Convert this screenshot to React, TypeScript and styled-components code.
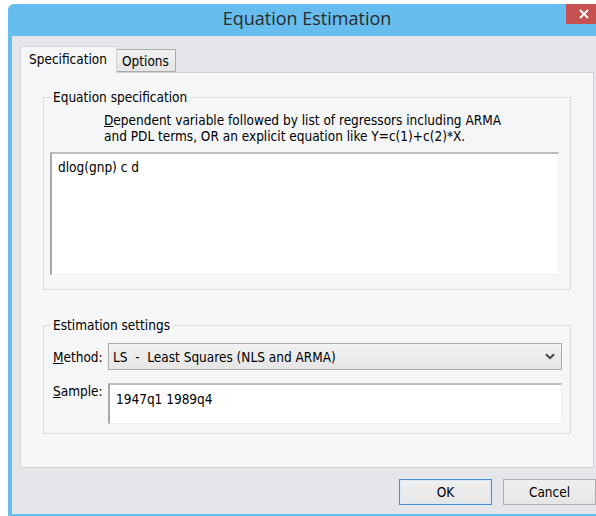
import styled, { createGlobalStyle } from "styled-components"

const GlobalStyle = createGlobalStyle`
  html, body {
    margin: 0;
    padding: 0;
    background: #fff;
    overflow: hidden;
  }
  body {
    width: 596px;
    height: 516px;
    font-family: "DejaVu Sans Condensed", "Liberation Sans", sans-serif;
    font-size: 13.5px;
    color: #000;
  }
`

const Window = styled.div`
  margin: 4px 0 0 8px;
  width: 598px;
  height: 512px;
  box-sizing: border-box;
  padding: 0 4px 2px 4px;
  background: #66bdee;
  border-radius: 6px 6px 0 0;
  display: flex;
  flex-direction: column;
`

const TitleBar = styled.div`
  height: 32px;
  display: grid;
  grid-template-columns: 1fr auto 1fr;
  align-items: start;
`

const Title = styled.div`
  grid-column: 2;
  font-family: "Open Sans", "Noto Sans", sans-serif;
  font-size: 18px;
  line-height: 28px;
  color: #2b2b2b;
`

const CloseButton = styled.div`
  grid-column: 3;
  justify-self: end;
  width: 36px;
  height: 20px;
  background: #c75050;
  display: flex;
  align-items: center;
  justify-content: center;
`

const Client = styled.div`
  flex: 1;
  background: #e5e6e9;
  padding: 10px 8px 0 8px;
  display: flex;
  flex-direction: column;
`

const TabStrip = styled.div`
  display: flex;
  align-items: flex-end;
  height: 26px;
  position: relative;
  z-index: 1;
`

const Tab = styled.div<{ $active?: boolean }>`
  box-sizing: border-box;
  height: ${(p) => (p.$active ? "27px" : "23px")};
  margin-bottom: ${(p) => (p.$active ? "-1px" : "0")};
  padding: ${(p) => (p.$active ? "3px 9px 0 8px" : "2px 6px 0 5px")};
  border: 1px solid ${(p) => (p.$active ? "#d4d4d4" : "#acacac")};
  border-bottom: ${(p) => (p.$active ? "none" : "1px solid #acacac")};
  border-left: ${(p) => (p.$active ? "1px solid #d4d4d4" : "none")};
  background: ${(p) => (p.$active ? "#f5f6f7" : "linear-gradient(#f0f0f0, #e5e5e5)")};
  line-height: 18px;
`

const Panel = styled.div`
  box-sizing: border-box;
  height: 396px;
  background: #f5f6f7;
  border: 1px solid #d4d4d4;
  padding: 16px 22px 0 22px;
`

const Group = styled.fieldset<{ $gap?: number }>`
  margin: ${(p) => p.$gap ?? 0}px 0 0 0;
  padding: 0 ${(p) => (p.$gap ? 8 : 11)}px ${(p) => (p.$gap ? 9 : 14)}px ${(p) => (p.$gap ? 9 : 6)}px;
  border: 1px solid #dcdcdc;
  min-width: 0;
`

const Legend = styled.legend<{ $shift?: number }>`
  padding: 0 3px;
  margin-left: ${(p) => p.$shift ?? 0}px;
  line-height: 16px;
`

const Hint = styled.div`
  margin: 7px 0 0 54px;
  line-height: 16px;
`

const TextBox = styled.div<{ $height: number; $pad: number }>`
  box-sizing: border-box;
  height: ${(p) => p.$height}px;
  background: #fff;
  border-top: 2px solid #bdbdbd;
  border-left: 2px solid #a8a8a8;
  border-right: 1px solid #f0f0f0;
  border-bottom: 1px solid #f0f0f0;
  padding: ${(p) => p.$pad}px 6px 0 6px;
  line-height: 16px;
`

const EquationBox = styled(TextBox)`
  margin-top: 8px;
`

const SettingsGrid = styled.div`
  margin-top: 10px;
  display: grid;
  grid-template-columns: 55px 1fr;
  row-gap: 13px;
  align-items: center;
`

const FieldLabel = styled.div<{ $top?: boolean }>`
  align-self: ${(p) => (p.$top ? "start" : "center")};
  line-height: 16px;
`

const Select = styled.div`
  box-sizing: border-box;
  height: 27px;
  border: 1px solid #acacac;
  background: linear-gradient(#f2f2f2, #e5e5e5);
  display: flex;
  align-items: center;
  justify-content: space-between;
  padding: 0 6px 0 4px;
  white-space: pre;
`

const ButtonRow = styled.div`
  display: flex;
  justify-content: flex-end;
  gap: 11px;
  margin: 11px -2px 0 0;
`

const Button = styled.div<{ $default?: boolean }>`
  box-sizing: border-box;
  width: 93px;
  height: 26px;
  border: 1px solid ${(p) => (p.$default ? "#4a90d0" : "#acacac")};
  box-shadow: ${(p) => (p.$default ? "inset 0 0 0 1px #d6e9f9" : "none")};
  background: linear-gradient(#f0f0f0, #e5e5e5);
  display: flex;
  align-items: center;
  justify-content: center;
`

const Chevron = () => (
  <svg width="10" height="7" viewBox="0 0 10 7">
    <path d="M1 1.2 L5 5.2 L9 1.2" fill="none" stroke="#444" strokeWidth="2" />
  </svg>
)

const CloseGlyph = () => (
  <svg width="10" height="10" viewBox="0 0 10 10">
    <path d="M1 1 L9 9 M9 1 L1 9" stroke="#fff" strokeWidth="2" />
  </svg>
)

export default function App() {
  return (
    <>
      <GlobalStyle />
      <Window>
        <TitleBar>
          <Title>Equation Estimation</Title>
          <CloseButton>
            <CloseGlyph />
          </CloseButton>
        </TitleBar>
        <Client>
          <TabStrip>
            <Tab $active>Specification</Tab>
            <Tab>Options</Tab>
          </TabStrip>
          <Panel>
            <Group>
              <Legend>Equation specification</Legend>
              <Hint>
                <u>D</u>ependent variable followed by list of regressors including ARMA
                <br />
                and PDL terms, OR an explicit equation like Y=c(1)+c(2)*X.
              </Hint>
              <EquationBox $height={123} $pad={5}>
                dlog(gnp) c d
              </EquationBox>
            </Group>
            <Group $gap={27}>
              <Legend $shift={-3}>Estimation settings</Legend>
              <SettingsGrid>
                <FieldLabel>
                  <u>M</u>ethod:
                </FieldLabel>
                <Select>
                  <span>LS  -  Least Squares (NLS and ARMA)</span>
                  <Chevron />
                </Select>
                <FieldLabel $top>
                  <u>S</u>ample:
                </FieldLabel>
                <TextBox $height={41} $pad={6}>
                  1947q1 1989q4
                </TextBox>
              </SettingsGrid>
            </Group>
          </Panel>
          <ButtonRow>
            <Button $default>OK</Button>
            <Button>Cancel</Button>
          </ButtonRow>
        </Client>
      </Window>
    </>
  )
}
